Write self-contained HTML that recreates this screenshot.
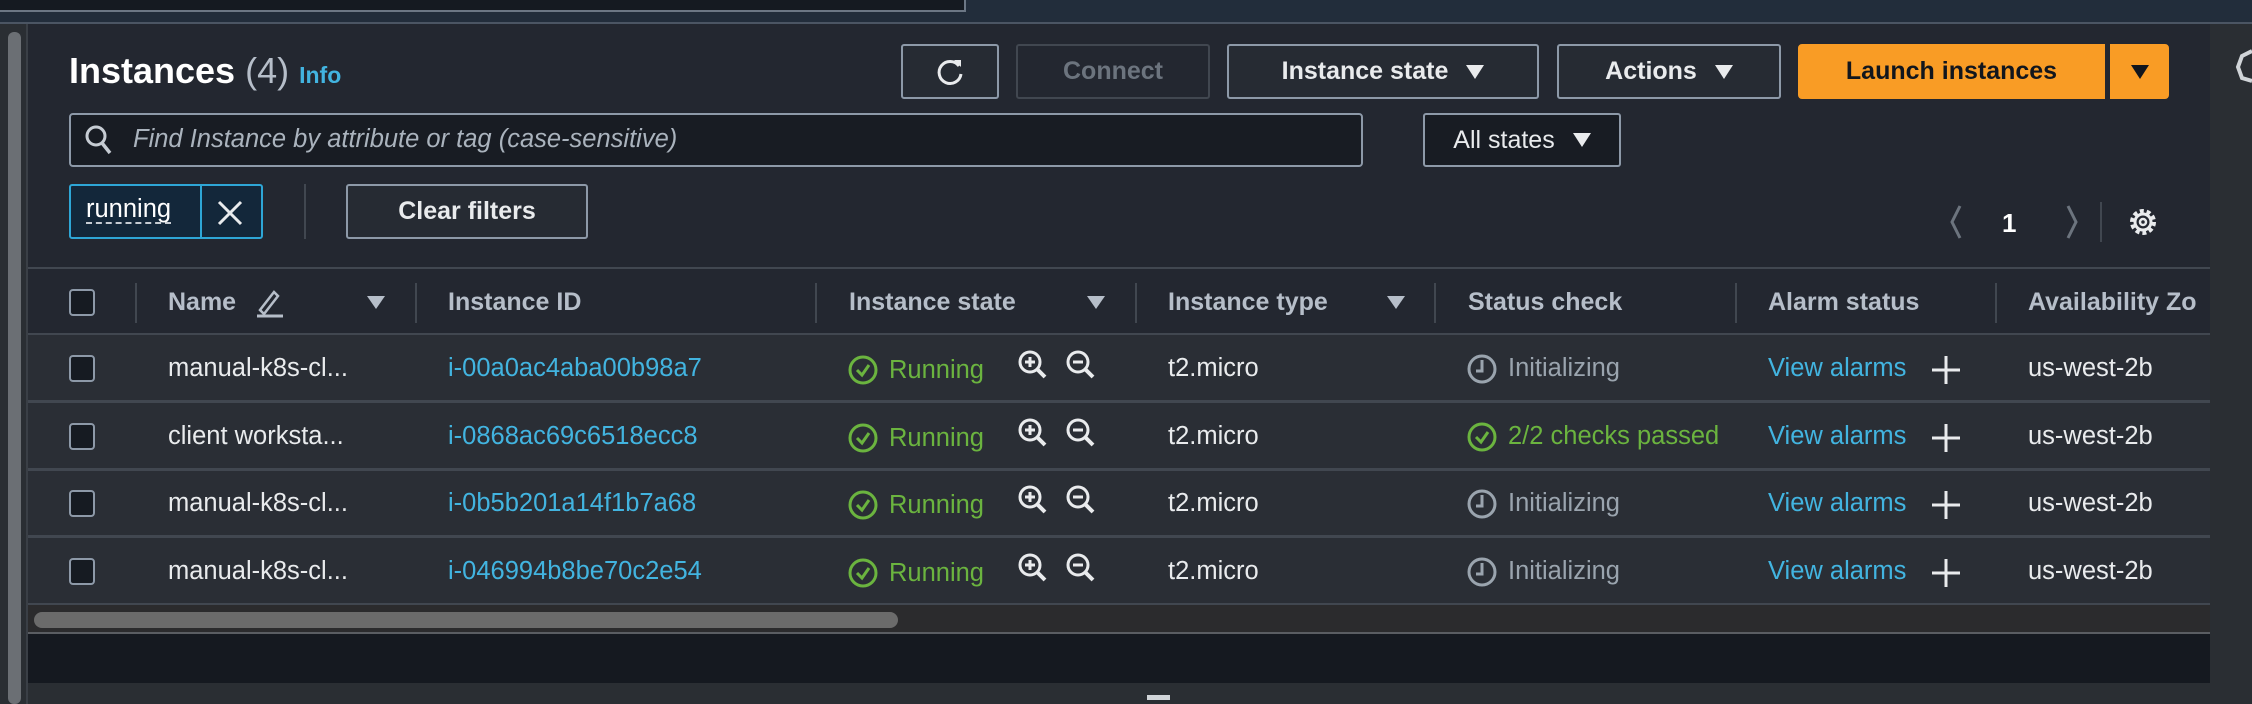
<!DOCTYPE html>
<html><head><meta charset="utf-8"><style>
*{margin:0;padding:0;box-sizing:border-box}
body{width:2252px;height:704px;overflow:hidden;background:#232730;font-family:"Liberation Sans",sans-serif;position:relative;color:#e9ebed}
.a{position:absolute}
.btn{position:absolute;border:2px solid #8d99a8;border-radius:3px;background:#262b33;color:#e9ebed;font-weight:bold;font-size:25px;display:flex;align-items:center;justify-content:center;gap:18px}
.tri{width:0;height:0;border-left:9px solid transparent;border-right:9px solid transparent;border-top:14px solid #e9ebed;display:inline-block}
.hd{position:absolute;top:288px;font-weight:bold;font-size:25px;color:#b6bec9}
.sep{position:absolute;top:283px;width:2px;height:40px;background:#414750}
.ft{position:absolute;top:296px;width:0;height:0;border-left:9px solid transparent;border-right:9px solid transparent;border-top:13px solid #b6bec9}
.cb{position:absolute;left:69px;width:26px;height:27px;border:2px solid #8d99a8;border-radius:4px;background:#161b22}
.t{position:absolute;font-size:25.5px;white-space:nowrap}
</style></head><body>
<div class="a" style="left:0;top:0;width:2252px;height:22px;background:#222d3b"></div>
<div class="a" style="left:0;top:0;width:966px;height:12px;background:#151a21;border-bottom:2px solid #6c7785;border-right:2px solid #6c7785"></div>
<div class="a" style="left:0;top:22px;width:2252px;height:2px;background:#4b5563"></div>
<div class="a" style="left:0;top:24px;width:28px;height:680px;background:#2a2e33"></div>
<div class="a" style="left:8px;top:32px;width:13px;height:672px;background:#6b6f74;border-radius:6px"></div>
<div class="a" style="left:26px;top:24px;width:2px;height:680px;background:#3a3f46"></div>
<div class="a" style="left:2210px;top:24px;width:42px;height:680px;background:#2a2e33"></div>
<svg class="a" style="left:2232px;top:45px" width="20" height="40"><path d="M20 6 L10 11 L6 22 L10 33 L20 36" fill="none" stroke="#d0d4d8" stroke-width="4"/></svg>

<div class="a" style="left:69px;top:50px;font-size:36px;font-weight:bold;color:#fff">Instances <span style="font-weight:normal;color:#b6bec9">(4)</span> <span style="font-size:23px;color:#42b4e0">Info</span></div>

<div class="btn" style="left:901px;top:44px;width:98px;height:55px"><svg width="30" height="30" viewBox="0 0 30 30"><path d="M24 9 A11 11 0 1 0 26 17" fill="none" stroke="#e9ebed" stroke-width="3"/><path d="M19 3 L26 3 L26 10 Z" fill="#e9ebed"/></svg></div>
<div class="btn" style="left:1016px;top:44px;width:194px;height:55px;border-color:#414750;color:#6c747e;background:#232730">Connect</div>
<div class="btn" style="left:1227px;top:44px;width:312px;height:55px">Instance state <span class="tri"></span></div>
<div class="btn" style="left:1557px;top:44px;width:224px;height:55px">Actions <span class="tri"></span></div>
<div class="btn" style="left:1798px;top:44px;width:307px;height:55px;background:#f99c25;border-color:#f99c25;color:#12161d;border-radius:4px 0 0 4px">Launch instances</div>
<div class="btn" style="left:2110px;top:44px;width:59px;height:55px;background:#f99c25;border-color:#f99c25;border-radius:0 4px 4px 0"><span class="tri" style="border-top-color:#12161d"></span></div>

<div class="a" style="left:69px;top:113px;width:1294px;height:54px;border:2px solid #8d99a8;border-radius:4px;background:#181c23"></div>
<svg class="a" style="left:84px;top:124px" width="30" height="32"><circle cx="12" cy="12" r="9" fill="none" stroke="#c6ccd3" stroke-width="3"/><path d="M18 19 L26 29" stroke="#c6ccd3" stroke-width="3.5"/></svg>
<div class="t" style="left:133px;top:125px;font-style:italic;color:#aab3bd">Find Instance by attribute or tag (case-sensitive)</div>
<div class="btn" style="left:1423px;top:113px;width:198px;height:54px;background:#181c23;font-weight:normal">All states <span class="tri"></span></div>

<div class="a" style="left:69px;top:184px;width:194px;height:55px;border:2px solid #2ea6d6;border-radius:3px;background:#13273a"></div>
<div class="a" style="left:200px;top:186px;width:2px;height:51px;background:#2ea6d6"></div>
<div class="t" style="left:86px;top:196px;color:#fff;border-bottom:2px dashed #c6ccd3;line-height:26px">running</div>
<svg class="a" style="left:216px;top:199px" width="28" height="28"><path d="M3 3 L25 25 M25 3 L3 25" stroke="#e9ebed" stroke-width="3"/></svg>
<div class="a" style="left:304px;top:184px;width:2px;height:55px;background:#414750"></div>
<div class="btn" style="left:346px;top:184px;width:242px;height:55px">Clear filters</div>

<svg class="a" style="left:1940px;top:202px" width="220" height="40"><path d="M20 4 L12 20 L20 36" fill="none" stroke="#6c747e" stroke-width="3"/><text x="62" y="30" font-family="Liberation Sans" font-weight="bold" font-size="26" fill="#fff">1</text><path d="M128 4 L136 20 L128 36" fill="none" stroke="#6c747e" stroke-width="3"/><rect x="160" y="-10" width="2" height="60" fill="#414750"/><circle cx="203" cy="20" r="11" fill="none" stroke="#e9ebed" stroke-width="4" stroke-dasharray="4 2.9"/><circle cx="203" cy="20" r="8" fill="none" stroke="#e9ebed" stroke-width="3"/><circle cx="203" cy="20" r="3" fill="none" stroke="#e9ebed" stroke-width="2.5"/></svg>

<div class="a" style="left:28px;top:267px;width:2182px;height:2px;background:#414750"></div>
<div class="a" style="left:28px;top:333px;width:2182px;height:2px;background:#414750"></div>
<div class="cb" style="top:289px"></div>
<div class="sep" style="left:135px"></div><div class="sep" style="left:415px"></div><div class="sep" style="left:815px"></div><div class="sep" style="left:1135px"></div><div class="sep" style="left:1434px"></div><div class="sep" style="left:1735px"></div><div class="sep" style="left:1995px"></div>
<div class="hd" style="left:168px">Name</div>
<svg class="a" style="left:254px;top:288px" width="32" height="30"><path d="M6 22 L20 4 L24 8 L10 26 Z" fill="none" stroke="#b6bec9" stroke-width="2.5"/><path d="M3 28 L29 28" stroke="#b6bec9" stroke-width="3"/></svg>
<div class="ft" style="left:367px"></div>
<div class="hd" style="left:448px">Instance ID</div>
<div class="hd" style="left:849px">Instance state</div>
<div class="ft" style="left:1087px"></div>
<div class="hd" style="left:1168px">Instance type</div>
<div class="ft" style="left:1387px"></div>
<div class="hd" style="left:1468px">Status check</div>
<div class="hd" style="left:1768px">Alarm status</div>
<div class="hd" style="left:2028px">Availability Zo</div>

<div class="a" style="left:28px;top:335px;width:2182px;height:270px;background:#2a2e35"></div>

<div id="rows"></div>
<div class="a" style="left:28px;top:605px;width:2182px;height:28px;background:#2b2b2d"></div>
<div class="a" style="left:34px;top:612px;width:864px;height:16px;background:#6b6b6b;border-radius:8px"></div>
<div class="a" style="left:28px;top:632px;width:2182px;height:2px;background:#5a5d62"></div>
<div class="a" style="left:28px;top:634px;width:2182px;height:49px;background:#151920"></div>
<div class="a" style="left:28px;top:683px;width:2224px;height:21px;background:#2a2e33"></div>
<div class="a" style="left:1147px;top:695px;width:23px;height:5px;background:#d0d4d8"></div>

<script>
var data=[["manual-k8s-cl...","i-00a0ac4aba00b98a7",0],["client worksta...","i-0868ac69c6518ecc8",1],["manual-k8s-cl...","i-0b5b201a14f1b7a68",0],["manual-k8s-cl...","i-046994b8be70c2e54",0]];
var h="";
data.forEach(function(d,i){var y=335+i*67.5;var c=y+34;
h+='<div class="a" style="left:28px;top:'+(y+65)+'px;width:2182px;height:3px;background:#414750"></div>';
h+='<div class="cb" style="top:'+(c-14)+'px"></div>';
h+='<div class="t" style="left:168px;top:'+(c-15)+'px">'+d[0]+'</div>';
h+='<div class="t" style="left:448px;top:'+(c-15)+'px;color:#42b4e0">'+d[1]+'</div>';
h+='<svg class="a" style="left:848px;top:'+(c-15)+'px" width="32" height="32"><circle cx="15" cy="16" r="13" fill="none" stroke="#6bb43f" stroke-width="3"/><path d="M9 16 L14 21 L21 11" fill="none" stroke="#6bb43f" stroke-width="3"/></svg>';
h+='<div class="t" style="left:889px;top:'+(c-13)+'px;color:#6bb43f">Running</div>';
['+','-'].forEach(function(s,k){h+='<svg class="a" style="left:'+(1017+k*48)+'px;top:'+(c-20)+'px" width="32" height="32"><circle cx="13" cy="13" r="10" fill="none" stroke="#e9ebed" stroke-width="3"/><path d="M20 20 L28 28" stroke="#e9ebed" stroke-width="4"/><path d="M8 13 H18'+(s=='+'?' M13 8 V18':'')+'" stroke="#e9ebed" stroke-width="3"/></svg>';});
h+='<div class="t" style="left:1168px;top:'+(c-15)+'px">t2.micro</div>';
if(d[2]){h+='<svg class="a" style="left:1467px;top:'+(c-17)+'px" width="32" height="34"><circle cx="15" cy="17" r="13" fill="none" stroke="#6bb43f" stroke-width="3"/><path d="M9 17 L14 22 L21 12" fill="none" stroke="#6bb43f" stroke-width="3"/></svg><div class="t" style="left:1508px;top:'+(c-15)+'px;color:#6bb43f">2/2 checks passed</div>';}
else{h+='<svg class="a" style="left:1467px;top:'+(c-17)+'px" width="32" height="34"><circle cx="15" cy="17" r="13" fill="none" stroke="#9aa4ae" stroke-width="3"/><path d="M15 8 V19 H9" fill="none" stroke="#9aa4ae" stroke-width="3"/></svg><div class="t" style="left:1508px;top:'+(c-15)+'px;color:#9aa4ae">Initializing</div>';}
h+='<div class="t" style="left:1768px;top:'+(c-15)+'px;color:#42b4e0">View alarms</div>';
h+='<svg class="a" style="left:1931px;top:'+(c-14)+'px" width="30" height="30"><path d="M15 1 V29 M1 15 H29" stroke="#e9ebed" stroke-width="3"/></svg>';
h+='<div class="t" style="left:2028px;top:'+(c-15)+'px">us-west-2b</div>';
});
document.getElementById('rows').outerHTML=h;
</script>
</body></html>
